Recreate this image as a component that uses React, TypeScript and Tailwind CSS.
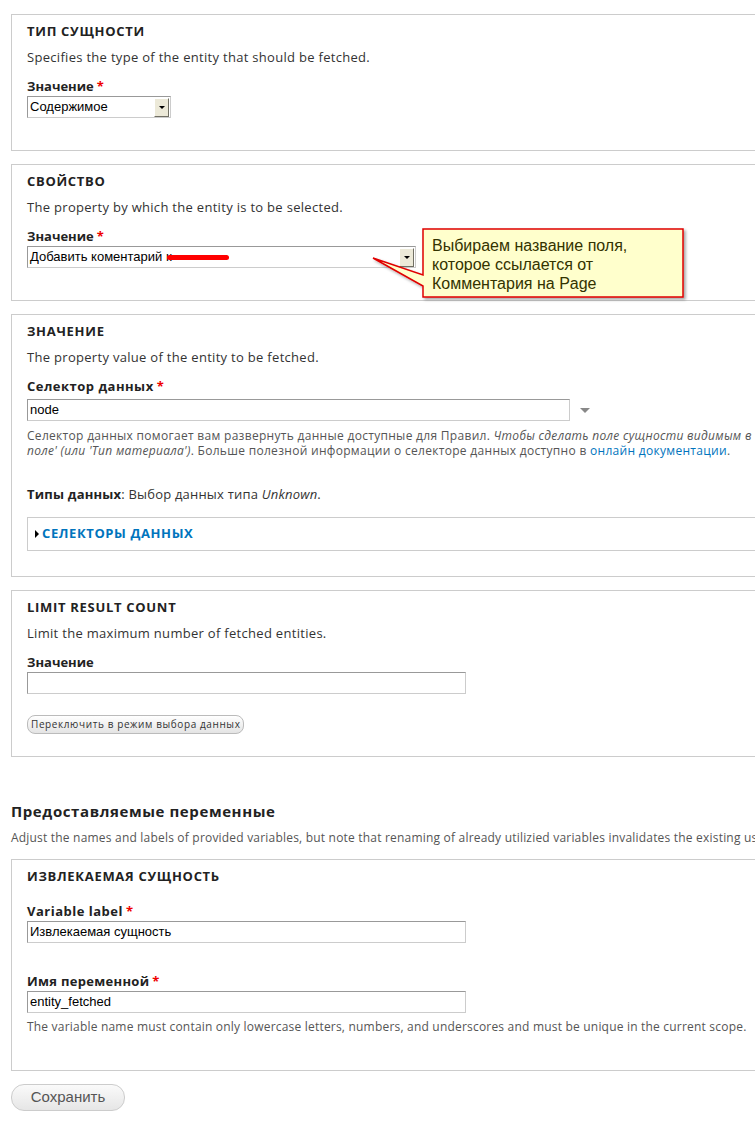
import React from 'react';

const Req = () => <span className="text-[#e00] ml-[3px]">*</span>;

const SelectBox: React.FC<{ width: string; value: string; children?: React.ReactNode }> = ({ width, value, children }) => (
  <div className={`relative flex items-center h-[22px] border border-t-[#999] border-l-[#999] border-r-[#ccc] border-b-[#ccc] bg-white ${width}`}>
    <span className="pl-[2px] text-[13px] text-black font-['Liberation_Sans',Arial,sans-serif] flex-1 whitespace-nowrap">{value}</span>
    {children}
    <div className="w-[15px] h-[19px] mr-[1px] bg-[#ece9d8] border border-t-white border-l-white border-r-[#716f64] border-b-[#716f64] flex items-center justify-center">
      <div className="w-0 h-0 border-l-[3px] border-r-[3px] border-t-[3px] border-l-transparent border-r-transparent border-t-black"></div>
    </div>
  </div>
);

const TextInput: React.FC<{ width: string; value?: string }> = ({ width, value }) => (
  <div className={`h-[22px] border border-t-[#999] border-l-[#999] border-r-[#ccc] border-b-[#ccc] bg-white flex items-center pl-[2px] text-[13px] text-black font-['Liberation_Sans',Arial,sans-serif] ${width}`}>
    {value}
  </div>
);

const Fieldset: React.FC<{ title: string; children: React.ReactNode; className?: string }> = ({ title, children, className }) => (
  <div className={`border border-[#ccc] px-[15px] pt-[8px] ${className ?? ''}`}>
    <div className="text-[13px] font-bold uppercase text-[#222] leading-[16px] tracking-[0.7px]">{title}</div>
    {children}
  </div>
);

export default function App() {
  return (
    <div className="w-[755px] h-[1141px] overflow-hidden bg-white relative font-['Open_Sans','Noto_Sans',sans-serif] text-[#333]">
      <div className="w-[900px] pl-[11px] pt-[14px]">

        {/* Тип сущности */}
        <Fieldset title="Тип сущности" className="pb-[32px]">
          <p className="text-[13px] mt-[10px] leading-[16px] tracking-[0.3px]">Specifies the type of the entity that should be fetched.</p>
          <div className="text-[13px] font-bold text-[#222] mt-[13px] leading-[16px]">Значение<Req /></div>
          <div className="mt-[2px]"><SelectBox width="w-[144px]" value="Содержимое" /></div>
        </Fieldset>

        {/* Свойство */}
        <Fieldset title="Свойство" className="mt-[13px] pb-[32px]">
          <p className="text-[13px] mt-[10px] leading-[16px] tracking-[0.3px]">The property by which the entity is to be selected.</p>
          <div className="text-[13px] font-bold text-[#222] mt-[13px] leading-[16px]">Значение<Req /></div>
          <div className="mt-[2px]">
            <SelectBox width="w-[389px]" value="Добавить коментарий к">
              <span className="absolute left-[139px] top-[8px] w-[62px] h-[5px] rounded-full bg-[#ff0000]"></span>
            </SelectBox>
          </div>
        </Fieldset>

        {/* Значение */}
        <Fieldset title="Значение" className="mt-[13px] pb-[25px]">
          <p className="text-[13px] mt-[10px] leading-[16px] tracking-[0.3px]">The property value of the entity to be fetched.</p>
          <div className="text-[13px] font-bold text-[#222] mt-[13px] leading-[16px] tracking-[0.5px]">Селектор данных<Req /></div>
          <div className="mt-[5px] flex items-center">
            <TextInput width="w-[543px]" value="node" />
            <div className="ml-[10px] w-0 h-0 border-l-[5px] border-r-[5px] border-t-[5px] border-l-transparent border-r-transparent border-t-[#888]"></div>
          </div>
          <p className="text-[12px] text-[#555] tracking-[0.3px] leading-[15px] mt-[7px] whitespace-nowrap">
            Селектор данных помогает вам развернуть данные доступные для Правил. <em>Чтобы сделать поле сущности видимым в</em>
            <br />
            <em>поле' (или 'Тип материала')</em>. Больше полезной информации о селекторе данных доступно в{' '}
            <span className="text-[#0074bd]">онлайн документации</span>.
          </p>
          <p className="text-[13px] mt-[28px] leading-[16px] tracking-[0.2px]"><b className="text-[#222]">Типы данных</b>: Выбор данных типа <em>Unknown</em>.</p>
          <div className="mt-[15px] border border-[#ccc] h-[34px] flex items-center pl-[7px]">
            <div className="w-0 h-0 border-t-[4px] border-b-[4px] border-l-[4px] border-t-transparent border-b-transparent border-l-black mr-[3px]"></div>
            <span className="text-[13px] font-bold uppercase text-[#0074bd] tracking-[0.6px]">Селекторы данных</span>
          </div>
        </Fieldset>

        {/* Limit result count */}
        <Fieldset title="Limit result count" className="mt-[13px] pb-[22px]">
          <p className="text-[13px] mt-[10px] leading-[16px] tracking-[0.3px]">Limit the maximum number of fetched entities.</p>
          <div className="text-[13px] font-bold text-[#222] mt-[13px] leading-[16px]">Значение</div>
          <div className="mt-[2px]"><TextInput width="w-[439px]" /></div>
          <button className="mt-[21px] h-[19px] px-[3px] rounded-[8px] border border-[#bbb] bg-gradient-to-b from-white to-[#e4e4e4] text-[10px] text-[#333] tracking-[0.6px] leading-[17px]">
            Переключить в режим выбора данных
          </button>
        </Fieldset>

        {/* Provided variables */}
        <h2 className="mt-[45px] text-[15px] font-bold text-[#222] leading-[18px] tracking-[0.6px]">Предоставляемые переменные</h2>
        <p className="text-[12px] text-[#555] mt-[10px] leading-[15px] whitespace-nowrap tracking-[0.2px]">
          Adjust the names and labels of provided variables, but note that renaming of already utilizied variables invalidates the existing uses of those variables.
        </p>

        <Fieldset title="Извлекаемая сущность" className="mt-[14px] pb-[36px]">
          <div className="text-[13px] font-bold text-[#222] mt-[19px] leading-[16px] tracking-[0.5px]">Variable label<Req /></div>
          <div className="mt-[2px]"><TextInput width="w-[439px]" value="Извлекаемая сущность" /></div>
          <div className="text-[13px] font-bold text-[#222] mt-[30px] leading-[16px] tracking-[0.3px]">Имя переменной<Req /></div>
          <div className="mt-[2px]"><TextInput width="w-[439px]" value="entity_fetched" /></div>
          <p className="text-[12px] text-[#555] mt-[6px] leading-[15px] tracking-[0.2px] whitespace-nowrap">
            The variable name must contain only lowercase letters, numbers, and underscores and must be unique in the current scope.
          </p>
        </Fieldset>

        <button className="mt-[13px] w-[114px] h-[27px] rounded-[13px] border border-[#ccc] bg-gradient-to-b from-[#fafafa] to-[#e6e6e6] text-[15px] text-[#555] font-['Liberation_Sans',Arial,sans-serif]">
          Сохранить
        </button>
      </div>

      {/* Callout annotation */}
      <svg className="absolute left-0 top-0 pointer-events-none" width="755" height="320">
        <defs>
          <filter id="sh" x="-10%" y="-10%" width="130%" height="140%">
            <feDropShadow dx="2" dy="2" stdDeviation="1.5" floodColor="#000" floodOpacity="0.35" />
          </filter>
        </defs>
        <path d="M423 229 L683 229 L683 297 L423 297 L423 286 L373 258 L423 275 Z" fill="#ffffcc" stroke="#e00000" strokeWidth="1.5" filter="url(#sh)" />
      </svg>
      <div className="absolute left-[432px] top-[236px] text-[16px] leading-[19px] text-[#333300] font-['Liberation_Sans',Arial,sans-serif]">
        Выбираем название поля,<br />которое ссылается от<br />Комментария на Page
      </div>
    </div>
  );
}
